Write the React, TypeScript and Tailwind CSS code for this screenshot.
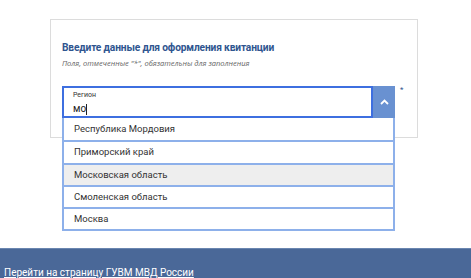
import React from "react";

const items = [
  "Республика Мордовия",
  "Приморский край",
  "Московская область",
  "Смоленская область",
  "Москва",
];

export default function App() {
  return (
    <div className="w-full bg-white" style={{ fontFamily: 'Roboto, "Noto Sans", sans-serif' }}>
      <div className="pt-[19px] pl-[50px] h-[248px]">
        <div className="relative w-[368px] h-[119px] border-[1.5px] border-[#dcdcdc] px-[11px] pt-[20px]">
          <h1 className="text-[10.2px] font-bold text-[#2f558f] leading-[15px] tracking-[-0.15px]">
            Введите данные для оформления квитанции
          </h1>
          <p
            className="mt-[2px] text-[7.5px] italic text-[#666] leading-[12px]"
            style={{ fontFamily: '"Open Sans", sans-serif' }}
          >
            Поля, отмеченные "*", обязательны для заполнения
          </p>
          <div className="relative mt-[17px] flex w-[333px]">
            <div className="flex h-[32px] w-[311px] flex-col border-2 border-[#3e6fe0] pl-[9px] pt-[2px]">
              <span className="text-[7px] leading-[10px] text-[#333]">Регион</span>
              <span className="text-[10px] leading-[14px] text-[#222] mt-[2px] flex items-center">
                мо<span className="inline-block h-[11px] w-px bg-[#222]" />
              </span>
            </div>
            <div className="flex h-[32px] w-[22px] items-center justify-center bg-[#6991d1]">
              <svg width="9" height="6" viewBox="0 0 9 6" fill="none">
                <path d="M1 5 L4.5 1.5 L8 5" stroke="white" strokeWidth="1.8" />
              </svg>
            </div>
            <span className="absolute left-[338px] top-[-2px] text-[8px] text-[#2f558f]">*</span>
            <ul className="absolute left-0 top-[32px] z-10 w-[333px] border-x-2 border-b-2 border-[#8db0ea] bg-white">
              {items.map((it, i) => (
                <li
                  key={it}
                  className={`flex h-[22.3px] items-center pl-[10px] text-[9.5px] text-[#333] ${
                    i > 0 ? "border-t-2 border-[#8db0ea]" : ""
                  } ${i === 2 ? "bg-[#eeeeee]" : "bg-white"}`}
                >
                  {it}
                </li>
              ))}
            </ul>
          </div>
        </div>
      </div>
      <div className="h-[40px] bg-[#4a6898] border-t border-[#6a86b0] px-[4px] pt-[10px]">
        <a className="text-[10px] text-white underline leading-[16px]">
          Перейти на страницу ГУВМ МВД России
        </a>
      </div>
    </div>
  );
}
